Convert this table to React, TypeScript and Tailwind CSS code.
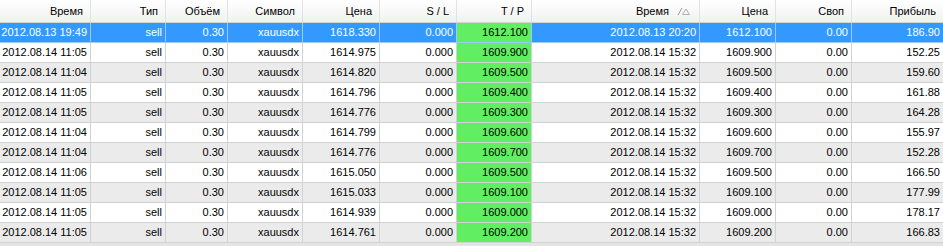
import React from "react";

type Row = {
  open: string;
  time: string;
  price: string;
  tp: string;
  closeTime: string;
  profit: string;
};

const rows: Row[] = [
  { open: "2012.08.13 19:49", time: "", price: "1618.330", tp: "1612.100", closeTime: "2012.08.13 20:20", profit: "186.90" },
  { open: "2012.08.14 11:05", time: "", price: "1614.975", tp: "1609.900", closeTime: "2012.08.14 15:32", profit: "152.25" },
  { open: "2012.08.14 11:04", time: "", price: "1614.820", tp: "1609.500", closeTime: "2012.08.14 15:32", profit: "159.60" },
  { open: "2012.08.14 11:05", time: "", price: "1614.796", tp: "1609.400", closeTime: "2012.08.14 15:32", profit: "161.88" },
  { open: "2012.08.14 11:05", time: "", price: "1614.776", tp: "1609.300", closeTime: "2012.08.14 15:32", profit: "164.28" },
  { open: "2012.08.14 11:04", time: "", price: "1614.799", tp: "1609.600", closeTime: "2012.08.14 15:32", profit: "155.97" },
  { open: "2012.08.14 11:04", time: "", price: "1614.776", tp: "1609.700", closeTime: "2012.08.14 15:32", profit: "152.28" },
  { open: "2012.08.14 11:06", time: "", price: "1615.050", tp: "1609.500", closeTime: "2012.08.14 15:32", profit: "166.50" },
  { open: "2012.08.14 11:05", time: "", price: "1615.033", tp: "1609.100", closeTime: "2012.08.14 15:32", profit: "177.99" },
  { open: "2012.08.14 11:05", time: "", price: "1614.939", tp: "1609.000", closeTime: "2012.08.14 15:32", profit: "178.17" },
  { open: "2012.08.14 11:05", time: "", price: "1614.761", tp: "1609.200", closeTime: "2012.08.14 15:32", profit: "166.83" },
];

const cols =
  "grid grid-cols-[91px_75px_62px_75px_77px_77px_75px_168px_76px_76px_91px]";

const headers = ["Время", "Тип", "Объём", "Символ", "Цена", "S / L", "T / P", "Время", "Цена", "Своп", "Прибыль"];

function SortMark() {
  return (
    <svg width="14" height="10" viewBox="0 0 14 10" className="ml-[8px] mr-[1px]">
      <line x1="1" y1="9" x2="5" y2="2" stroke="#9a9a9a" strokeWidth="1" />
      <path d="M5.5 8.5 L9 3 L12.5 8.5 Z" fill="none" stroke="#b0b0b0" strokeWidth="1" />
    </svg>
  );
}

export default function App() {
  return (
    <div
      className="w-[943px] h-[246px] overflow-hidden bg-[#e4e4e4] text-[11px] text-black"
      style={{ fontFamily: '"Liberation Sans", Arial, sans-serif' }}
    >
      {/* Header */}
      <div className={`${cols} h-[23px] bg-gradient-to-b from-white to-[#f1f1f1] border-b border-[#d5d5d5]`}>
        {headers.map((h, i) => (
          <div
            key={i}
            className={`flex items-center justify-end pr-[7px] ${i < 10 ? "border-r border-[#e2e2e2]" : ""}`}
          >
            <span>{h}</span>
            {i === 7 && <SortMark />}
          </div>
        ))}
      </div>

      {/* Rows */}
      {rows.map((r, i) => {
        const selected = i === 0;
        const bg = selected ? "bg-[#3399ff] text-white" : i % 2 === 0 ? "bg-[#ebebeb]" : "bg-white";
        const line = selected ? "border-[#9cc9f5]" : "border-[#d2d2d2]";
        const cells = [r.open, "sell", "0.30", "xauusdx", r.price, "0.000", r.tp, r.closeTime, r.tp, "0.00", r.profit];
        return (
          <div key={i} className={`${cols} h-[20px] border-b ${line} ${bg}`}>
            {cells.map((c, j) => (
              <div
                key={j}
                className={`flex items-center justify-end pr-[3px] ${j < 10 ? `border-r ${line}` : ""} ${
                  j === 6 ? "bg-[#62ee62] text-black" : ""
                }`}
              >
                {c}
              </div>
            ))}
          </div>
        );
      })}
    </div>
  );
}
